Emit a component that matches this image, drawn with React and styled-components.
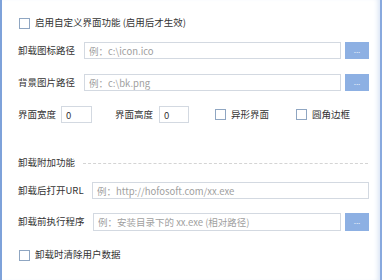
import React from 'react';
import styled, { createGlobalStyle } from 'styled-components';

const Global = createGlobalStyle`
  html, body {
    margin: 0;
    padding: 0;
    background: #fff;
  }
  body {
    font-family: "Noto Sans CJK SC", "Noto Sans", sans-serif;
    font-size: 9.5px;
    color: #333;
  }
`;

const Panel = styled.div`
  width: 382px;
  height: 280px;
  box-sizing: border-box;
  border-left: 2px solid #7ea2da;
  border-right: 2px solid #88a9de;
  box-shadow: inset -5px 0 5px -3px #d9e4f4;
  padding: 17px 0 0 16px;
  display: flex;
  flex-direction: column;
`;

const Row = styled.div`
  display: flex;
  align-items: center;
  height: ${p => p.h || 17}px;
  margin-top: ${p => p.mt || 0}px;
`;

const Label = styled.span`
  width: ${p => p.w}px;
  flex: none;
  white-space: nowrap;
  line-height: 1;
  margin-left: ${p => p.ml || 0}px;
`;

const Input = styled.div`
  box-sizing: border-box;
  height: ${p => p.h || 17}px;
  width: ${p => p.w}px;
  border: 1px solid #d3d9e1;
  background: #fff;
  padding-left: 4px;
  display: flex;
  align-items: center;
  color: ${p => (p.ph ? '#a0a0a0' : '#333')};
  white-space: nowrap;
  overflow: hidden;
  flex: none;
`;

const Browse = styled.div`
  width: 24px;
  height: ${p => p.h || 17}px;
  margin-left: 4px;
  background: #8db0e3;
  color: #eef3fb;
  font-size: 8px;
  display: flex;
  align-items: center;
  justify-content: center;
  line-height: 1;
  padding-bottom: 2px;
  box-sizing: border-box;
  flex: none;
`;

const Check = styled.label`
  display: flex;
  align-items: center;
  gap: 5px;
  margin-left: ${p => p.ml || 0}px;
  white-space: nowrap;
  line-height: 1;
  &::before {
    content: '';
    width: 11px;
    height: 11px;
    box-sizing: border-box;
    border: 1px solid #8fa6c2;
    background: #fff;
    flex: none;
  }
`;

const Section = styled.div`
  display: flex;
  align-items: center;
  height: 12px;
  margin-top: ${p => p.mt}px;
  span {
    flex: none;
    line-height: 1;
  }
  &::after {
    content: '';
    flex: 1;
    margin: 0 12px 0 8px;
    border-top: 1px dashed #d4d4d4;
  }
`;

export default function App() {
  return (
    <>
      <Global />
      <Panel>
        <Row h={12}>
          <Check ml={1}>启用自定义界面功能 (启用后才生效)</Check>
        </Row>
        <Row mt={13}>
          <Label w={66}>卸载图标路径</Label>
          <Input w={257} ph>例：c:\icon.ico</Input>
          <Browse>...</Browse>
        </Row>
        <Row mt={15}>
          <Label w={66}>背景图片路径</Label>
          <Input w={257} ph>例：c:\bk.png</Input>
          <Browse>...</Browse>
        </Row>
        <Row mt={15}>
          <Label w={43}>界面宽度</Label>
          <Input w={31}>0</Input>
          <Label w={44} ml={23}>界面高度</Label>
          <Input w={30}>0</Input>
          <Check ml={26}>异形界面</Check>
          <Check ml={27}>圆角边框</Check>
        </Row>
        <Section mt={34}>
          <span>卸载附加功能</span>
        </Section>
        <Row mt={13}>
          <Label w={74}>卸载后打开URL</Label>
          <Input w={277} ph>例：http://hofosoft.com/xx.exe</Input>
        </Row>
        <Row mt={14} h={18}>
          <Label w={75}>卸载前执行程序</Label>
          <Input w={248} h={18} ph>例：安装目录下的 xx.exe (相对路径)</Input>
          <Browse h={18}>...</Browse>
        </Row>
        <Row mt={18} h={12}>
          <Check ml={1}>卸载时清除用户数据</Check>
        </Row>
      </Panel>
    </>
  );
}
